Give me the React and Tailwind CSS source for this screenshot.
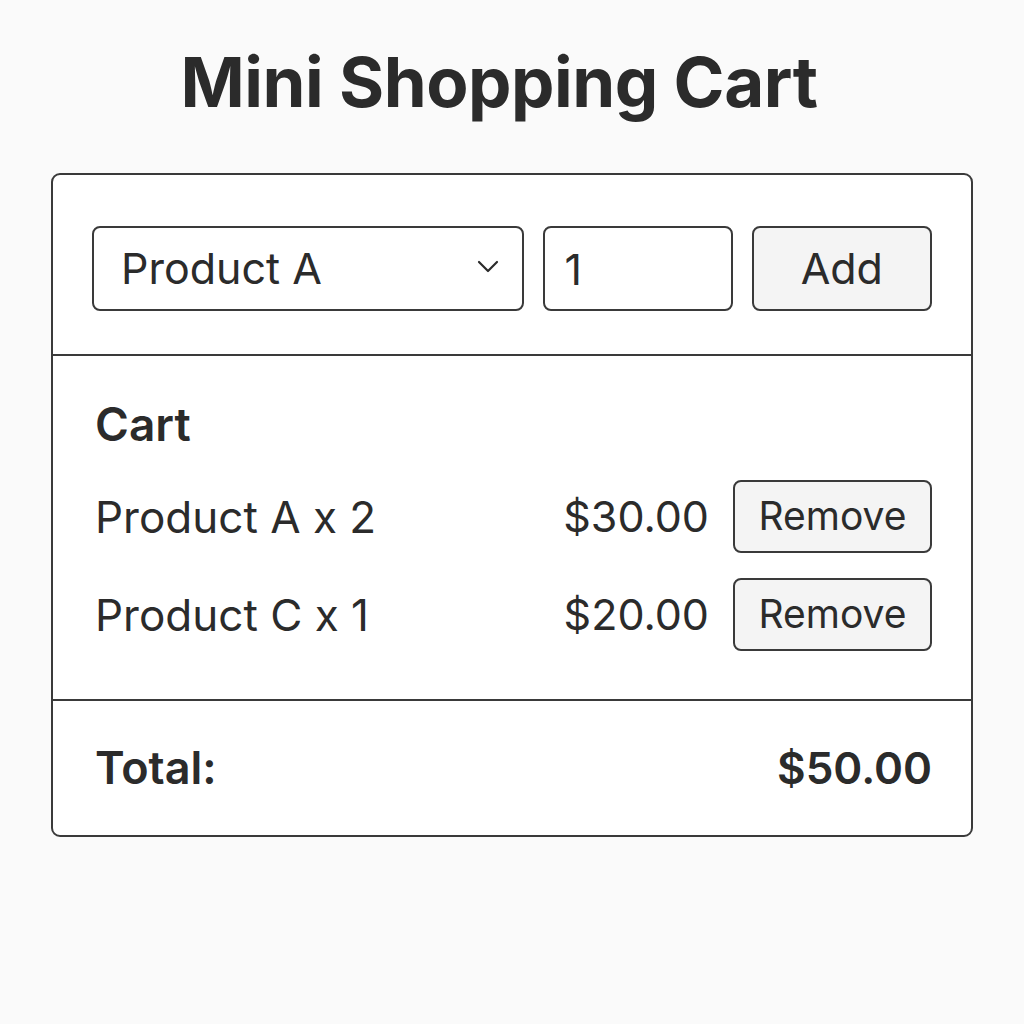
import { useState } from "react";

const catalog = [
  { name: "Product A", price: 15 },
  { name: "Product B", price: 12 },
  { name: "Product C", price: 20 },
];

function App() {
  const [selected, setSelected] = useState("Product A");
  const [qty, setQty] = useState(1);
  const [cart, setCart] = useState([
    { name: "Product A", qty: 2, price: 15 },
    { name: "Product C", qty: 1, price: 20 },
  ]);

  const addItem = () => {
    const product = catalog.find(p => p.name === selected);
    const n = Number(qty) || 1;
    setCart(prev => {
      const existing = prev.find(i => i.name === selected);
      if (existing) {
        return prev.map(i => (i.name === selected ? { ...i, qty: i.qty + n } : i));
      }
      return [...prev, { name: selected, qty: n, price: product.price }];
    });
  };

  const removeItem = name => setCart(prev => prev.filter(i => i.name !== name));

  const total = cart.reduce((sum, i) => sum + i.qty * i.price, 0);

  return (
    <div
      className="min-h-screen bg-[#fafafa] text-[#2b2b2b] flex flex-col items-center pt-[38px]"
      style={{ fontFamily: "Inter, 'Noto Sans', sans-serif" }}
    >
      <h1 className="text-[69px] font-bold leading-[88px] tracking-[-0.5px] text-center pr-[26px]">
        Mini Shopping Cart
      </h1>

      <div className="mt-[47px] w-[922px] bg-white border-2 border-[#3a3a3a] rounded-[9px]">
        {/* add row */}
        <div className="flex items-center gap-[19px] pl-[39px] pr-[39px] pt-[51px] pb-[43px] border-b-2 border-[#3a3a3a]">
          <div className="relative w-[433px] h-[85px]">
            <select
              value={selected}
              onChange={e => setSelected(e.target.value)}
              className="appearance-none w-full h-full border-2 border-[#3a3a3a] rounded-[8px] bg-white pl-[27px] text-[43px] outline-none"
            >
              {catalog.map(p => (
                <option key={p.name}>{p.name}</option>
              ))}
            </select>
            <svg
              className="absolute right-[24px] top-[33px] pointer-events-none"
              width="24"
              height="16"
              viewBox="0 0 24 16"
              fill="none"
              stroke="#2b2b2b"
              strokeWidth="2.2"
              strokeLinecap="round"
              strokeLinejoin="round"
            >
              <path d="M3 3l9 9 9-9" />
            </svg>
          </div>
          <input
            type="number"
            min="1"
            value={qty}
            onChange={e => setQty(e.target.value)}
            className="w-[190px] h-[85px] border-2 border-[#3a3a3a] rounded-[8px] bg-white px-[20px] text-[43px] outline-none [appearance:textfield] [&::-webkit-inner-spin-button]:appearance-none"
          />
          <button
            onClick={addItem}
            className="w-[181px] h-[85px] border-2 border-[#3a3a3a] rounded-[8px] bg-[#f4f4f4] text-[43px]"
          >
            Add
          </button>
        </div>

        {/* cart list */}
        <div className="pl-[42px] pr-[39px] pt-[40px] pb-[48px] border-b-2 border-[#3a3a3a]">
          <h2 className="text-[46px] font-semibold leading-[56px]">Cart</h2>
          <ul className="mt-[28px] flex flex-col gap-[25px]">
            {cart.map(item => (
              <li key={item.name} className="flex items-center h-[73px]">
                <span className="flex-1 text-[44px]">
                  {item.name} x {item.qty}
                </span>
                <span className="text-[43px]">${(item.qty * item.price).toFixed(2)}</span>
                <button
                  onClick={() => removeItem(item.name)}
                  className="ml-[24px] w-[199px] h-[73px] border-2 border-[#3a3a3a] rounded-[8px] bg-[#f4f4f4] text-[39px]"
                >
                  Remove
                </button>
              </li>
            ))}
          </ul>
        </div>

        {/* total */}
        <div className="flex items-center justify-between pl-[42px] pr-[39px] h-[134px]">
          <span className="text-[45px] font-semibold">Total:</span>
          <span className="text-[44px] font-semibold">${total.toFixed(2)}</span>
        </div>
      </div>
    </div>
  );
}

export default App;
